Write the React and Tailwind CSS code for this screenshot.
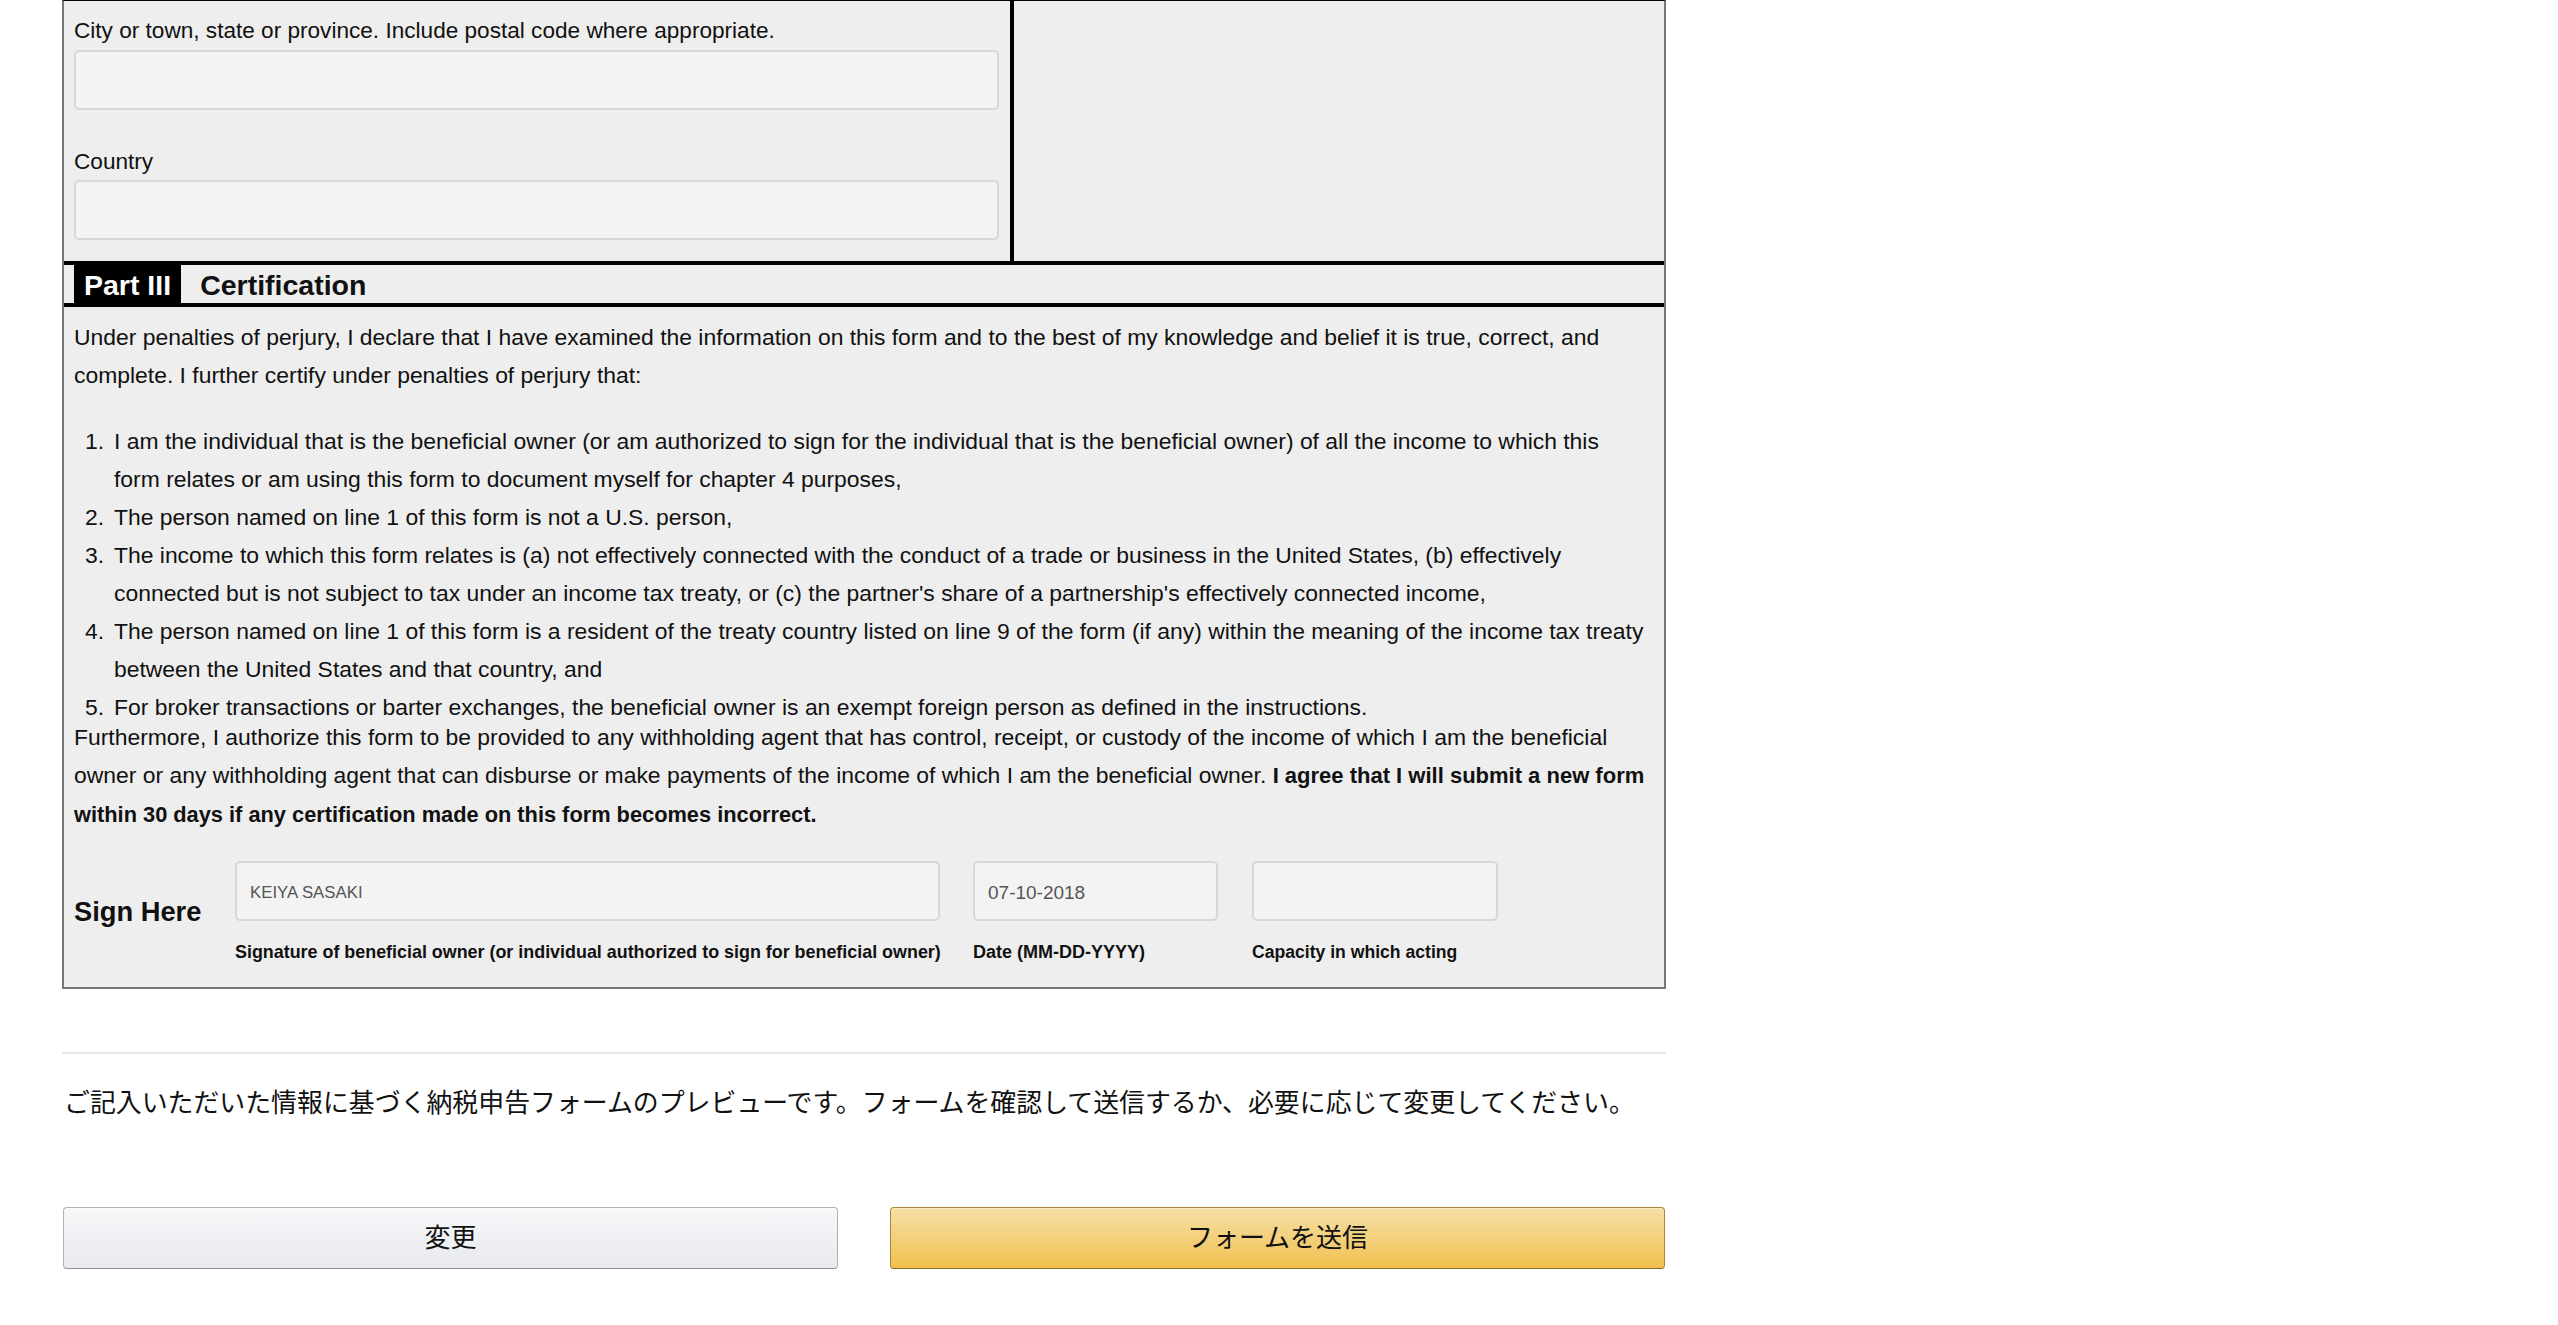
import React from 'react';

const items = [
  [
    'I am the individual that is the beneficial owner (or am authorized to sign for the individual that is the beneficial owner) of all the income to which this',
    'form relates or am using this form to document myself for chapter 4 purposes,',
  ],
  ['The person named on line 1 of this form is not a U.S. person,'],
  [
    'The income to which this form relates is (a) not effectively connected with the conduct of a trade or business in the United States, (b) effectively',
    "connected but is not subject to tax under an income tax treaty, or (c) the partner's share of a partnership's effectively connected income,",
  ],
  [
    'The person named on line 1 of this form is a resident of the treaty country listed on line 9 of the form (if any) within the meaning of the income tax treaty',
    'between the United States and that country, and',
  ],
  ['For broker transactions or barter exchanges, the beneficial owner is an exempt foreign person as defined in the instructions.'],
];

const Field = ({ className = '', value }) => (
  <div
    className={`h-[60px] rounded-[5px] border-2 border-[#d7d7d7] bg-[#f3f3f3] flex items-center px-[13px] pt-[3px] text-[#555] ${className}`}
  >
    {value}
  </div>
);

const App = () => {
  return (
    <div className="min-h-screen bg-white font-['Liberation_Sans',Arial,sans-serif] text-[#111]">
      <div className="ml-[62px] w-[1604px]">
        {/* form preview */}
        <div className="border-x-2 border-b-2 border-[#777] border-t border-t-black bg-[#eeeeee]">
          <div className="flex h-[260px]">
            <div className="w-[946px] pl-[10px] pr-[11px] pt-[15px]">
              <div className="text-[22.6px] leading-[30px]">City or town, state or province. Include postal code where appropriate.</div>
              <Field className="mt-[4px]" />
              <div className="mt-[37px] text-[22.6px] leading-[30px]">Country</div>
              <Field className="mt-[3px]" />
            </div>
            <div className="w-[4px] bg-black" />
            <div className="flex-1" />
          </div>

          <div className="h-[4px] bg-black" />
          <div className="flex h-[38px] items-center">
            <div className="ml-[10px] flex h-full items-center bg-black px-[10px] pt-[2px] text-[28.5px] font-bold text-white">Part III</div>
            <div className="ml-[19px] pt-[2px] text-[28.5px] font-bold">Certification</div>
          </div>
          <div className="h-[4px] bg-black" />

          <div className="px-[10px] pt-[11px] pb-[23px] text-[22.9px] leading-[38px] whitespace-nowrap">
            <p>
              Under penalties of perjury, I declare that I have examined the information on this form and to the best of my knowledge and belief it is true, correct, and
              <br />
              complete. I further certify under penalties of perjury that:
            </p>

            <div className="mt-[28px]">
              {items.map((lines, i) => (
                <div key={i} className="flex">
                  <span className="w-[40px] shrink-0 pr-[10px] text-right">{i + 1}.</span>
                  <div>
                    {lines.map((l, j) => (
                      <div key={j}>{l}</div>
                    ))}
                  </div>
                </div>
              ))}
            </div>

            <p className="mt-[-8px]">
              Furthermore, I authorize this form to be provided to any withholding agent that has control, receipt, or custody of the income of which I am the beneficial
              <br />
              owner or any withholding agent that can disburse or make payments of the income of which I am the beneficial owner.{' '}
              <b className="text-[22px]">I agree that I will submit a new form</b>
              <br />
              <b className="text-[21.8px]">within 30 days if any certification made on this form becomes incorrect.</b>
            </p>

            <div className="mt-[27px] flex">
              <div className="w-[161px] shrink-0 pt-[34px] text-[27.3px] font-bold leading-[34px]">Sign Here</div>
              <div className="w-[705px]">
                <Field value="KEIYA SASAKI" className="text-[16.8px]" />
                <div className="mt-[19px] text-[17.9px] font-bold leading-[24px]">Signature of beneficial owner (or individual authorized to sign for beneficial owner)</div>
              </div>
              <div className="ml-[33px] w-[245px]">
                <Field value="07-10-2018" className="text-[19px]" />
                <div className="mt-[19px] text-[18px] font-bold leading-[24px]">Date (MM-DD-YYYY)</div>
              </div>
              <div className="ml-[34px] w-[246px]">
                <Field />
                <div className="mt-[19px] text-[17.6px] font-bold leading-[24px]">Capacity in which acting</div>
              </div>
            </div>
          </div>
        </div>

        <div className="mt-[63px] h-[2px] bg-[#e7e7e7]" />

        <p className="mt-[31px] pl-[2px] font-['Liberation_Sans','Noto_Sans_CJK_JP',sans-serif] text-[25.9px] leading-[36px] text-[#111]">
          ご記入いただいた情報に基づく納税申告フォームのプレビューです。フォームを確認して送信するか、必要に応じて変更してください。
        </p>

        <div className="mt-[86px] grid grid-cols-2 gap-[52px] px-[1px] font-['Liberation_Sans','Noto_Sans_CJK_JP',sans-serif]">
          <button className="h-[62px] rounded-[4px] border border-[#adb1b8] border-b-[#8d9096] bg-linear-to-b from-[#f7f8fa] to-[#e7e9ec] text-[26px] text-[#111] shadow-[inset_0_1px_0_rgba(255,255,255,0.6)]">
            変更
          </button>
          <button className="h-[62px] rounded-[4px] border border-[#a88734] border-b-[#846a29] bg-linear-to-b from-[#f7dfa5] to-[#f0c14b] text-[26px] text-[#111] shadow-[inset_0_1px_0_rgba(255,255,255,0.4)]">
            フォームを送信
          </button>
        </div>
      </div>
    </div>
  );
};

export default App;
